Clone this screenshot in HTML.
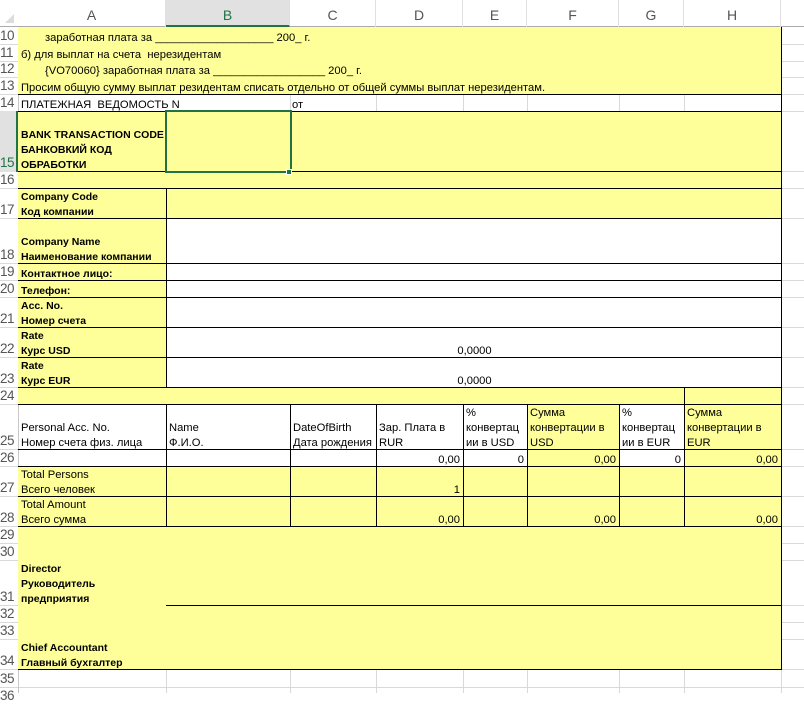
<!DOCTYPE html>
<html><head><meta charset="utf-8"><style>
*{margin:0;padding:0;box-sizing:border-box}
body{width:804px;height:693px;position:relative;overflow:hidden;background:#fff;font-family:"Liberation Sans",Arial,sans-serif}
.g,.gv,.h,.v,.y{position:absolute}
.g{height:1px;left:0;width:804px;background:#d9d9d9}
.gv{width:1px;top:27px;height:666px;background:#d9d9d9}
.y{background:#ffff99}
.h{height:1px;background:#000}
.v{width:1px;background:#000}
.t{position:absolute;display:flex;flex-direction:column;justify-content:flex-end;line-height:15px;font-size:11.2px;white-space:nowrap;color:#000;padding:0 0 0 2px;transform:translateY(2px)}
.b{font-weight:bold;font-size:10.5px}
.r{align-items:flex-end;padding-right:3px}
.c{align-items:center}
.ch{position:absolute;top:0;height:27px;line-height:30px;text-align:center;font-size:14px;color:#555;border-right:1px solid #e0e0e0}
.rh{position:absolute;left:0;width:18px;font-size:13.5px;color:#555;display:flex;align-items:flex-end;letter-spacing:-0.5px;line-height:16px}
</style></head><body>
<div class="g" style="top:44px"></div><div class="g" style="top:61px"></div><div class="g" style="top:77px"></div><div class="g" style="top:94px"></div><div class="g" style="top:111px"></div><div class="g" style="top:171px"></div><div class="g" style="top:188px"></div><div class="g" style="top:218px"></div><div class="g" style="top:263px"></div><div class="g" style="top:280px"></div><div class="g" style="top:297px"></div><div class="g" style="top:327px"></div><div class="g" style="top:357px"></div><div class="g" style="top:387px"></div><div class="g" style="top:404px"></div><div class="g" style="top:449px"></div><div class="g" style="top:466px"></div><div class="g" style="top:496px"></div><div class="g" style="top:526px"></div><div class="g" style="top:543px"></div><div class="g" style="top:560px"></div><div class="g" style="top:605px"></div><div class="g" style="top:622px"></div><div class="g" style="top:639px"></div><div class="g" style="top:669px"></div><div class="g" style="top:687px"></div>
<div class="gv" style="left:18px;background:#c8c8c8"></div><div class="gv" style="left:166px"></div><div class="gv" style="left:290px"></div><div class="gv" style="left:376px"></div><div class="gv" style="left:463px"></div><div class="gv" style="left:527px"></div><div class="gv" style="left:619px"></div><div class="gv" style="left:684px"></div><div class="gv" style="left:781px"></div>
<div style="position:absolute;left:166px;top:95px;width:1px;height:16px;background:#fff"></div>
<div style="position:absolute;left:0;top:0;width:804px;height:27px;background:#fff;border-bottom:1px solid #ababab"></div>
<div style="position:absolute;left:5px;top:14px;width:0;height:0;border-left:9px solid transparent;border-bottom:9px solid #dcdcdc"></div>
<div class="ch" style="left:18px;width:148px">A</div>
<div class="ch" style="left:166px;width:124px;background:#e1e1e1;color:#217346;border-bottom:2px solid #217346">B</div>
<div class="ch" style="left:290px;width:86px">C</div>
<div class="ch" style="left:376px;width:87px">D</div>
<div class="ch" style="left:463px;width:64px">E</div>
<div class="ch" style="left:527px;width:92px">F</div>
<div class="ch" style="left:619px;width:65px">G</div>
<div class="ch" style="left:684px;width:97px">H</div>
<div style="position:absolute;left:0;top:111px;width:18px;height:61px;background:#e1e1e1;border-right:2px solid #217346"></div>
<div class="y" style="left:18px;top:27px;width:763px;height:67px"></div>
<div class="y" style="left:18px;top:111px;width:763px;height:107px"></div>
<div class="y" style="left:18px;top:218px;width:148px;height:169px"></div>
<div class="y" style="left:18px;top:387px;width:763px;height:17px"></div>
<div class="y" style="left:527px;top:404px;width:92px;height:62px"></div>
<div class="y" style="left:684px;top:404px;width:97px;height:62px"></div>
<div class="y" style="left:18px;top:466px;width:763px;height:203px"></div>
<div style="position:absolute;left:167px;top:219px;width:614px;height:168px;background:#fff"></div>
<div class="h" style="left:18px;width:764px;top:94px"></div>
<div class="h" style="left:18px;width:764px;top:111px"></div>
<div class="h" style="left:18px;width:764px;top:171px"></div>
<div class="h" style="left:18px;width:764px;top:188px"></div>
<div class="h" style="left:18px;width:764px;top:218px"></div>
<div class="h" style="left:18px;width:764px;top:263px"></div>
<div class="h" style="left:18px;width:764px;top:280px"></div>
<div class="h" style="left:18px;width:764px;top:297px"></div>
<div class="h" style="left:18px;width:764px;top:327px"></div>
<div class="h" style="left:18px;width:764px;top:357px"></div>
<div class="h" style="left:18px;width:764px;top:387px"></div>
<div class="h" style="left:18px;width:764px;top:404px"></div>
<div class="h" style="left:18px;width:764px;top:449px"></div>
<div class="h" style="left:18px;width:764px;top:466px"></div>
<div class="h" style="left:18px;width:764px;top:496px"></div>
<div class="h" style="left:18px;width:764px;top:526px"></div>
<div class="h" style="left:166px;width:616px;top:605px"></div>
<div class="h" style="left:18px;width:764px;top:669px"></div>
<div class="v" style="left:781px;top:27px;height:643px"></div>
<div class="v" style="left:166px;top:188px;height:200px"></div>
<div class="v" style="left:166px;top:404px;height:122px"></div>
<div class="v" style="left:290px;top:404px;height:122px"></div>
<div class="v" style="left:376px;top:404px;height:122px"></div>
<div class="v" style="left:463px;top:404px;height:122px"></div>
<div class="v" style="left:527px;top:404px;height:122px"></div>
<div class="v" style="left:619px;top:404px;height:122px"></div>
<div class="v" style="left:684px;top:387px;height:139px"></div>
<div style="position:absolute;left:165px;top:110px;width:127px;height:63px;border:2px solid #217346"></div>
<div style="position:absolute;left:286px;top:169px;width:6px;height:6px;background:#217346;border:1px solid #fff"></div>
<div class="rh" style="top:27px;height:17px">10</div>
<div class="rh" style="top:44px;height:17px">11</div>
<div class="rh" style="top:61px;height:16px">12</div>
<div class="rh" style="top:77px;height:17px">13</div>
<div class="rh" style="top:94px;height:17px">14</div>
<div class="rh" style="top:111px;height:60px;color:#217346">15</div>
<div class="rh" style="top:171px;height:17px">16</div>
<div class="rh" style="top:188px;height:30px">17</div>
<div class="rh" style="top:218px;height:45px">18</div>
<div class="rh" style="top:263px;height:17px">19</div>
<div class="rh" style="top:280px;height:17px">20</div>
<div class="rh" style="top:297px;height:30px">21</div>
<div class="rh" style="top:327px;height:30px">22</div>
<div class="rh" style="top:357px;height:30px">23</div>
<div class="rh" style="top:387px;height:17px">24</div>
<div class="rh" style="top:404px;height:45px">25</div>
<div class="rh" style="top:449px;height:17px">26</div>
<div class="rh" style="top:466px;height:30px">27</div>
<div class="rh" style="top:496px;height:30px">28</div>
<div class="rh" style="top:526px;height:17px">29</div>
<div class="rh" style="top:543px;height:17px">30</div>
<div class="rh" style="top:560px;height:45px">31</div>
<div class="rh" style="top:605px;height:17px">32</div>
<div class="rh" style="top:622px;height:17px">33</div>
<div class="rh" style="top:639px;height:30px">34</div>
<div class="rh" style="top:669px;height:18px">35</div>
<div class="rh" style="top:687px;height:17px">36</div>
<div class="t" style="left:43px;top:27px;height:17px">заработная плата за ___________________ 200_ г.</div>
<div class="t" style="left:19px;top:44px;height:17px">б) для выплат на счета&nbsp; нерезидентам</div>
<div class="t" style="left:43px;top:61px;height:16px">{VO70060} заработная плата за __________________ 200_ г.</div>
<div class="t" style="left:19px;top:77px;height:17px">Просим общую сумму выплат резидентам списать отдельно от общей суммы выплат нерезидентам.</div>
<div class="t" style="left:19px;top:94px;height:17px">ПЛАТЕЖНАЯ&nbsp; ВЕДОМОСТЬ N</div>
<div class="t" style="left:290px;top:94px;height:17px">от</div>
<div class="t b" style="left:19px;top:111px;height:60px"><span>BANK TRANSACTION CODE</span><span>БАНКОВКИЙ КОД</span><span>ОБРАБОТКИ</span></div>
<div class="t b" style="left:19px;top:188px;height:30px"><span>Company Code</span><span>Код компании</span></div>
<div class="t b" style="left:19px;top:218px;height:45px"><span>Company Name</span><span>Наименование компании</span></div>
<div class="t b" style="left:19px;top:263px;height:17px">Контактное лицо:</div>
<div class="t b" style="left:19px;top:280px;height:17px">Телефон:</div>
<div class="t b" style="left:19px;top:297px;height:30px"><span>Acc. No.</span><span>Номер счета</span></div>
<div class="t b" style="left:19px;top:327px;height:30px"><span>Rate</span><span>Курс USD</span></div>
<div class="t b" style="left:19px;top:357px;height:30px"><span>Rate</span><span>Курс EUR</span></div>
<div class="t c" style="left:166px;width:615px;top:327px;height:30px">0,0000</div>
<div class="t c" style="left:166px;width:615px;top:357px;height:30px">0,0000</div>
<div class="t" style="left:19px;top:404px;height:45px"><span>Personal Acc. No.</span><span>Номер счета физ. лица</span></div>
<div class="t" style="left:167px;top:404px;height:45px"><span>Name</span><span>Ф.И.О.</span></div>
<div class="t" style="left:291px;top:404px;height:45px"><span>DateOfBirth</span><span>Дата рождения</span></div>
<div class="t" style="left:377px;top:404px;height:45px"><span>Зар. Плата в</span><span>RUR</span></div>
<div class="t" style="left:464px;top:404px;height:45px"><span>%</span><span>конвертац</span><span>ии в USD</span></div>
<div class="t" style="left:528px;top:404px;height:45px"><span>Сумма</span><span>конвертации в</span><span>USD</span></div>
<div class="t" style="left:620px;top:404px;height:45px"><span>%</span><span>конвертац</span><span>ии в EUR</span></div>
<div class="t" style="left:685px;top:404px;height:45px"><span>Сумма</span><span>конвертации в</span><span>EUR</span></div>
<div class="t r" style="left:376px;width:87px;top:449px;height:17px">0,00</div>
<div class="t r" style="left:463px;width:64px;top:449px;height:17px">0</div>
<div class="t r" style="left:527px;width:92px;top:449px;height:17px">0,00</div>
<div class="t r" style="left:619px;width:65px;top:449px;height:17px">0</div>
<div class="t r" style="left:684px;width:97px;top:449px;height:17px">0,00</div>
<div class="t" style="left:19px;top:466px;height:30px"><span>Total Persons</span><span>Всего человек</span></div>
<div class="t r" style="left:376px;width:87px;top:466px;height:30px">1</div>
<div class="t" style="left:19px;top:496px;height:30px"><span>Total Amount</span><span>Всего сумма</span></div>
<div class="t r" style="left:376px;width:87px;top:496px;height:30px">0,00</div>
<div class="t r" style="left:527px;width:92px;top:496px;height:30px">0,00</div>
<div class="t r" style="left:684px;width:97px;top:496px;height:30px">0,00</div>
<div class="t b" style="left:19px;top:560px;height:45px"><span>Director</span><span>Руководитель</span><span>предприятия</span></div>
<div class="t b" style="left:19px;top:639px;height:30px"><span>Chief Accountant</span><span>Главный бухгалтер</span></div>
</body></html>
